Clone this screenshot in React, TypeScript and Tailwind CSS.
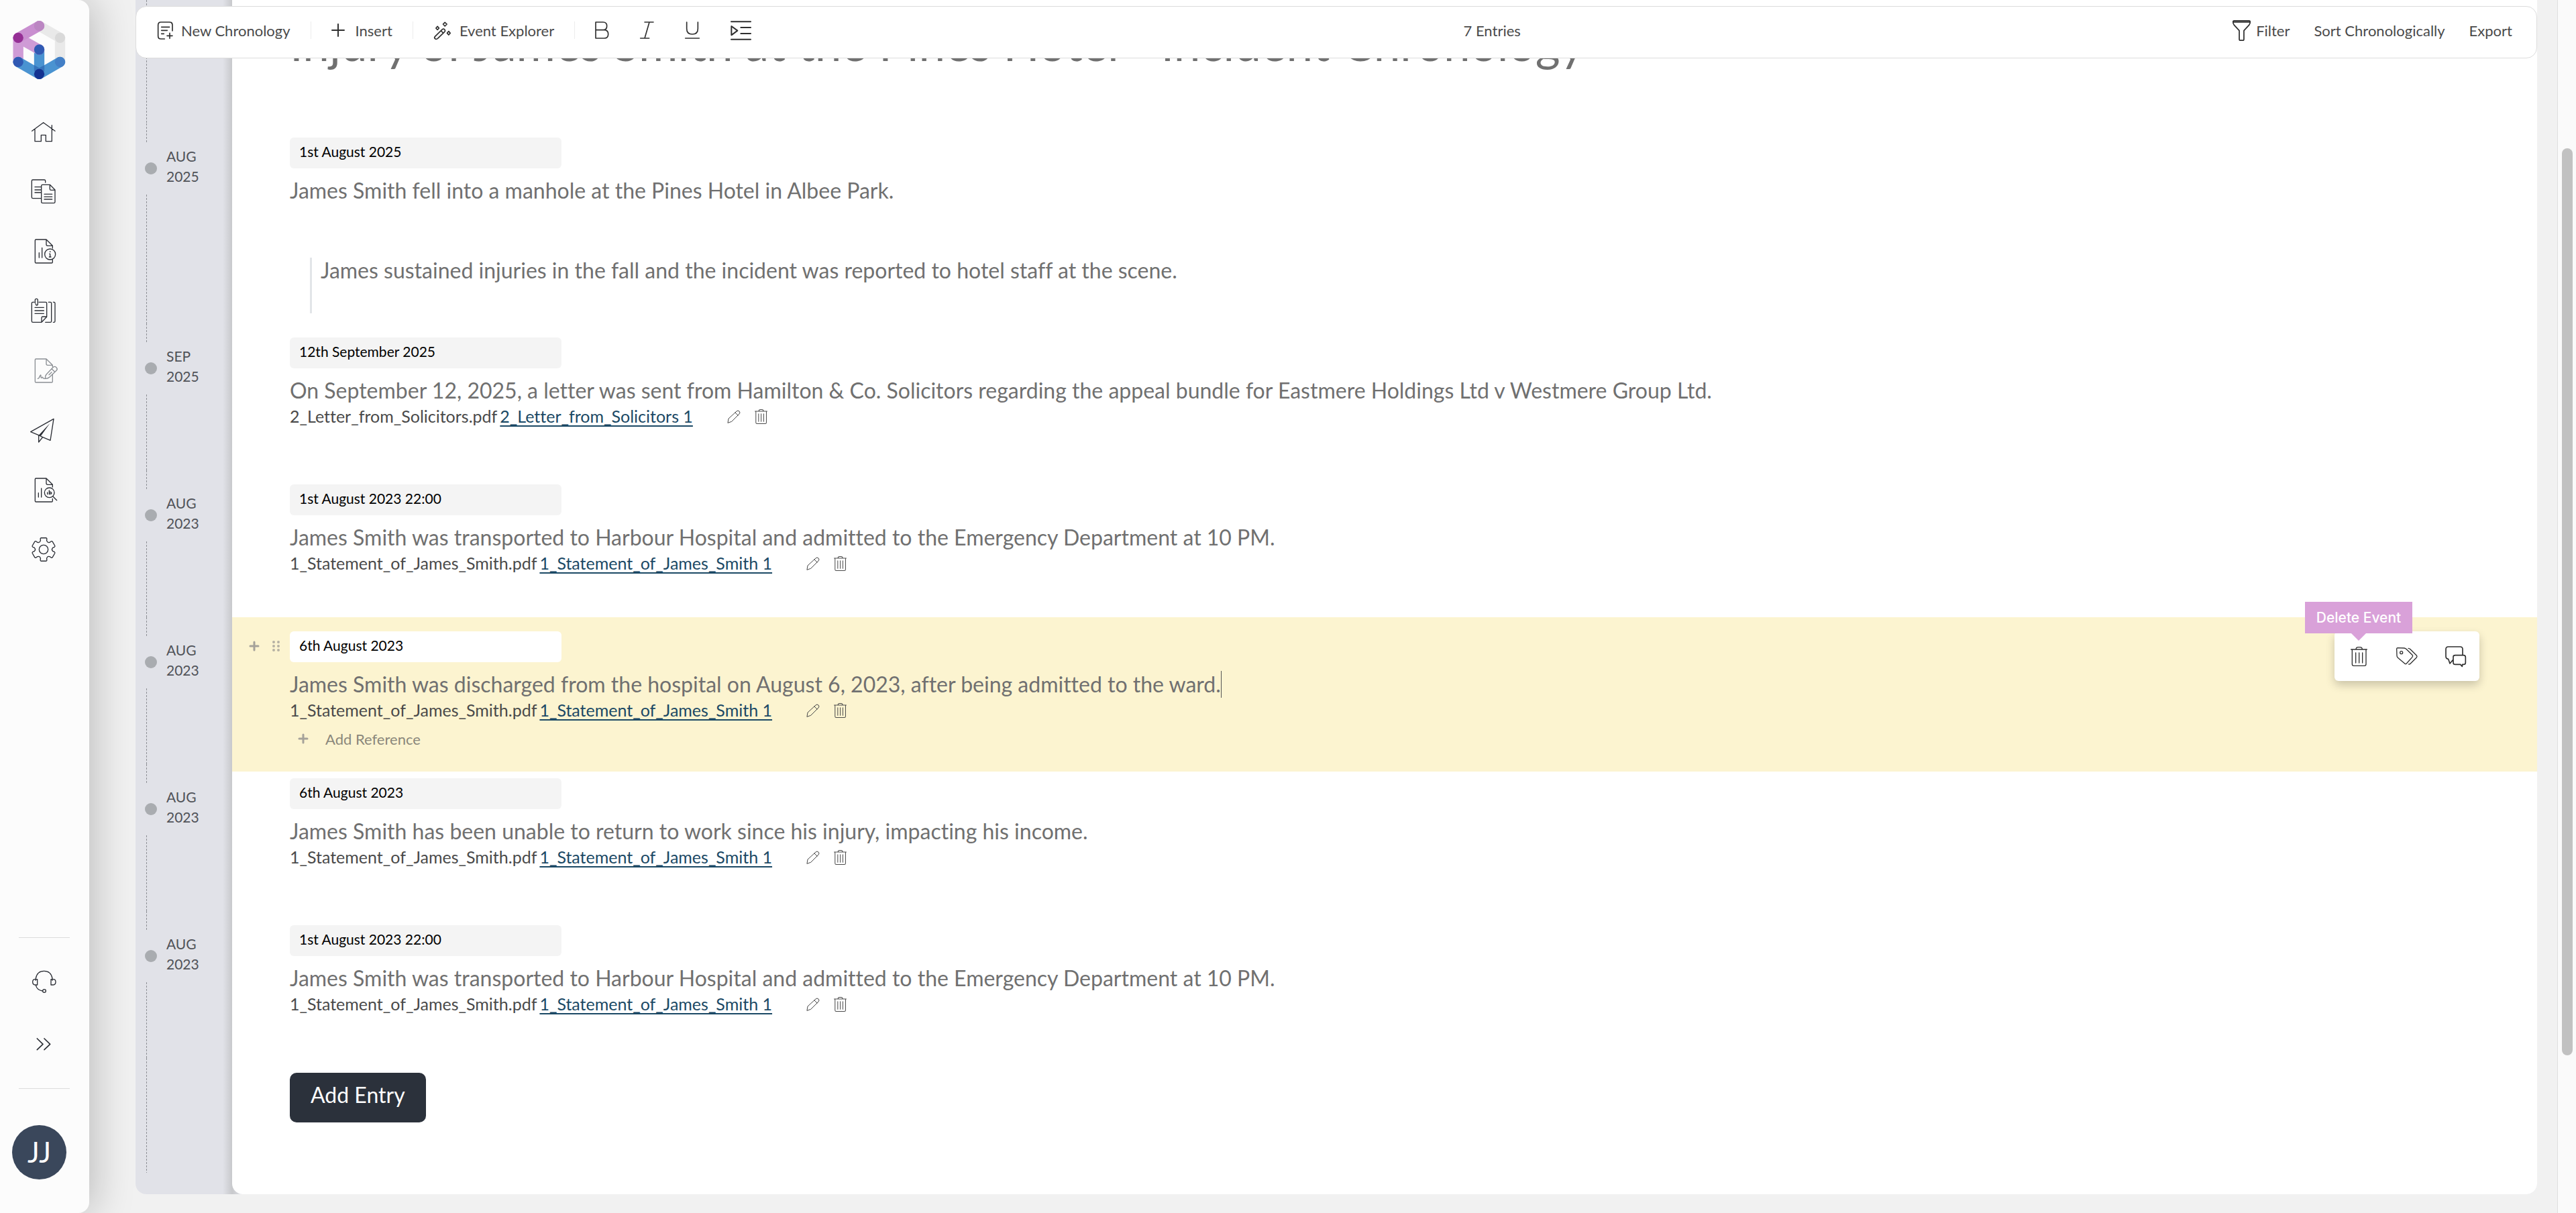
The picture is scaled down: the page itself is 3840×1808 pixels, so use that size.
import type { ReactNode } from 'react';

interface IconProps {
  children: ReactNode;
  className?: string;
  box?: string;
  stroke?: number;
}

function Icon({ children, className = 'size-9', box = '0 0 108 108', stroke = 4 }: IconProps) {
  return (
    <svg
      viewBox={box}
      className={`${className} shrink-0 overflow-visible`}
      fill="none"
      stroke="currentColor"
      strokeWidth={stroke}
      strokeLinecap="round"
      strokeLinejoin="round"
      aria-hidden="true"
    >
      {children}
    </svg>
  );
}

const PAGE = 'M94 42V31L66 3H20q-4 0-4 4v97q0 4 4 4h70q4 0 4-4V94M66 3v22q0 6 6 6h22';

function cogPath() {
  const pts: string[] = [];
  const at = (deg: number, r: number) => {
    const a = ((deg - 90) * Math.PI) / 180;
    return `${(54 + r * Math.cos(a)).toFixed(1)} ${(54 + r * Math.sin(a)).toFixed(1)}`;
  };
  for (let i = 0; i < 6; i++) {
    const d = i * 60;
    pts.push(`${i ? 'L' : 'M'}${at(d - 22, 40)}L${at(d - 19, 42)}L${at(d - 17, 50)}Q${at(d - 16, 53)} ${at(d - 12, 53)}`);
    pts.push(`L${at(d + 12, 53)}Q${at(d + 16, 53)} ${at(d + 17, 50)}L${at(d + 19, 42)}L${at(d + 22, 40)}`);
    pts.push(`Q${at(d + 30, 35)} ${at(d + 38, 40)}`);
  }
  return pts.join('') + 'Z';
}

function Logo() {
  return (
    <svg viewBox="0 0 236 264" className="h-[88px] w-[79px]" fill="none" strokeWidth="46" strokeLinecap="round" aria-label="Home">
      <path d="M118 23L211 76V184" stroke="#e9e9e9" strokeLinejoin="round" />
      <path d="M118 129V238" stroke="#4a93d1" />
      <path d="M24 76V184M118 129L24 76" stroke="#cf9bd6" />
      <path d="M118 23L24 76" stroke="#c98fd0" />
      <path d="M24 184L118 238L211 184" stroke="#4a93d1" strokeLinejoin="round" />
      <path d="M95 225V198L118 211L141 198V225L118 238Z" fill="#3573bb" stroke="none" />
      <g stroke="none">
        <circle cx="118" cy="23" r="23" fill="#bb86c2" />
        <circle cx="24" cy="76" r="23" fill="#952f95" />
        <circle cx="211" cy="76" r="23" fill="#d9d9d9" />
        <circle cx="118" cy="129" r="23" fill="#3059b3" />
        <circle cx="24" cy="184" r="23" fill="#3059b3" />
        <circle cx="211" cy="184" r="23" fill="#437fc6" />
        <circle cx="118" cy="238" r="23" fill="#143291" />
      </g>
    </svg>
  );
}

const navItems = [
  { label: 'Home', art: <path d="M2 52L53 14L105 52M15 44V98H43V70H64V98H91V26" /> },
  {
    label: 'Bundles',
    art: (
      <>
        <path d="M62 15V8q0-5-5-5H6q-5 0-5 5v73q0 5 5 5H43M15 35H42M15 48H42M15 60H42" />
        <path d="M82 25H49q-5 0-5 5v72q0 5 5 5h51q5 0 5-5V48L82 25V44q0 5 5 5h17M57 67H92M57 79H92M57 90H92" />
      </>
    ),
  },
  {
    label: 'Reports',
    art: (
      <>
        <path d={PAGE} />
        <path d="M34 62V84M47 40V84M83 67V80M80 67H83M79 81H87" />
        <circle cx="83" cy="69" r="24" />
        <circle cx="83" cy="58" r="1" />
      </>
    ),
  },
  {
    label: 'Chronologies',
    art: (
      <>
        <path d="M12 16H6q-5 0-5 5v80q0 5 5 5H45L68 82V21q0-5-5-5H33M45 106V86q0-5 5-5H68M15 40H55M15 54H55M15 67H55" />
        <path d="M16 20V7q0-6 6-6q6 0 6 6V24q0 6-5 6q-4 0-4-6" />
        <path d="M76 16H84q5 0 5 5v80q0 5-5 5H62M97 16h3q5 0 5 5v80q0 5-5 5h-3" />
      </>
    ),
  },
  {
    label: 'Drafting',
    muted: true,
    art: (
      <>
        <path d="M94 38V31L66 3H20q-4 0-4 4v97q0 4 4 4h70q4 0 4-4V72M66 3v22q0 6 6 6h22" />
        <path d="M62 91Q60 78 67 71L97 40Q104 34 111 41Q118 48 112 54L81 84Q74 91 62 91ZM90 47L104 61M78 74L90 62" />
        <path d="M28 91Q34 90 38 78Q42 70 42 80Q42 92 47 86Q50 82 51 88Q54 92 62 91" />
      </>
    ),
  },
  {
    label: 'Send',
    art: (
      <>
        <path d="M-4 62L99 4L84 100L50 86L32 77ZM32 77V108L50 86" />
        <path d="M32 77L82 24L42 80Z" fill="currentColor" stroke="none" />
      </>
    ),
  },
  {
    label: 'Search documents',
    art: (
      <>
        <path d={PAGE} />
        <path d="M31 68V87M44 48V87M96 84L113 101M71 66V74M79 57V74M84 62V74M89 66V72" />
        <circle cx="80" cy="67" r="22" />
      </>
    ),
  },
  {
    label: 'Settings',
    art: (
      <>
        <path d={cogPath()} />
        <circle cx="54" cy="54" r="20" />
      </>
    ),
  },
];

function Sidebar() {
  return (
    <aside className="z-20 flex w-[133px] shrink-0 flex-col rounded-r-2xl bg-[#fcfcfc] text-[#2b2e35] shadow-[8px_0_60px_rgba(0,0,0,0.22)]">
      <div className="pt-[31px] pl-[19px]">
        <Logo />
      </div>
      <nav className="mt-8 flex flex-col">
        {navItems.map((item) => (
          <button
            key={item.label}
            aria-label={item.label}
            className={`flex h-[89px] items-center pl-[47px] ${item.muted ? 'text-[#8b8f94]' : ''}`}
          >
            <Icon>{item.art}</Icon>
          </button>
        ))}
      </nav>
      <div className="mt-auto mr-[29px] ml-[28px] flex flex-col items-center border-y border-[#dcdcdc] py-5">
        <button aria-label="Support" className="flex h-[92px] items-center">
          <Icon>
            <path d="M16 46V37Q22 4 53 4T90 37V46M23 41V66H16Q2 66 2 53Q2 40 14 41ZM84 41V66H91Q105 66 105 53Q105 40 93 41ZM16 68Q22 90 46 93" />
            <circle cx="54" cy="93" r="7" />
          </Icon>
        </button>
        <button aria-label="Expand menu" className="flex h-[92px] items-center">
          <Icon stroke={5}>
            <path d="M22 30L48 55L22 80M54 30L80 55L54 80" />
          </Icon>
        </button>
      </div>
      <button className="mt-[54px] mb-[50px] ml-[18px] size-[81px] rounded-full bg-[#3a475b] text-[42px] text-white">JJ</button>
    </aside>
  );
}

function ToolbarDivider() {
  return <span className="h-[26px] w-px bg-[#ececec]" />;
}

function Toolbar() {
  return (
    <header className="absolute inset-x-0 top-[9px] z-10 flex h-[78px] items-center justify-between rounded-2xl border border-[#dcdcdc] bg-white pr-9 pb-[6px] pl-8 text-[22px] text-[#4a4a4a]">
      <div className="flex items-center gap-[30px]">
        <button className="flex items-center gap-3">
          <Icon className="h-[27px] w-[23px] text-[#2f2f2f]" box="0 0 69 81" stroke={5}>
            <path d="M66 42V16Q66 3 53 3H15Q2 3 2 16V65Q2 78 15 78H31M17 25H53M17 40H43M17 55H28M54 52V76M42 64H66" />
          </Icon>
          New Chronology
        </button>
        <ToolbarDivider />
        <button className="flex items-center gap-4">
          <Icon className="size-5 text-[#2f2f2f]" box="0 0 20 20" stroke={2}>
            <path d="M10 1V19M1 10H19" />
          </Icon>
          Insert
        </button>
        <ToolbarDivider />
        <button className="flex items-center gap-3">
          <Icon className="size-[27px] text-[#2f2f2f]" box="0 0 78 81" stroke={5}>
            <path d="M6 67L39 35Q44 31 49 36Q53 41 49 46L17 77Q11 81 6 77Q1 72 6 67ZM33 42L43 52" />
            <path d="M50 4L59 12L50 21L42 12ZM17 22L24 30L17 37L10 30ZM67 44L74 52L67 60L60 52Z" />
          </Icon>
          Event Explorer
        </button>
        <ToolbarDivider />
        <div className="flex items-center gap-[46px] text-[#2f2f2f]">
          <button aria-label="Bold">
            <Icon className="h-[26px] w-[21px]" box="0 0 63 78" stroke={5}>
              <path d="M3 3H36Q53 3 53 20T36 38H3ZM3 38H40Q59 38 59 57T40 75H3Z" />
            </Icon>
          </button>
          <button aria-label="Italic">
            <Icon className="h-[26px] w-[21px]" box="0 0 63 78" stroke={5}>
              <path d="M21 3H60M2 75H41M42 3L21 75" />
            </Icon>
          </button>
          <button aria-label="Underline">
            <Icon className="h-[26px] w-[22px]" box="0 0 66 78" stroke={5}>
              <path d="M8 3V32Q8 57 33 57T58 32V3M2 75H64" />
            </Icon>
          </button>
          <button aria-label="Indent">
            <Icon className="h-[29px] w-[31px]" box="0 0 93 87" stroke={6}>
              <path d="M3 4H90M46 30H90M46 57H90M3 83H90M4 24V64L31 44Z" />
            </Icon>
          </button>
        </div>
      </div>
      <span>7 Entries</span>
      <div className="flex items-center gap-9">
        <button className="flex items-center gap-2">
          <Icon className="h-8 w-[27px] text-[#2f2f2f]" box="0 0 78 92" stroke={5}>
            <path d="M6 5H72Q76 5 76 10Q76 18 71 24L49 48V84Q49 90 44 90H34Q29 90 29 84V48L7 24Q2 18 2 10Q2 5 6 5ZM3 11H75" />
          </Icon>
          Filter
        </button>
        <button>Sort Chronologically</button>
        <button>Export</button>
      </div>
    </header>
  );
}

function TrashIcon({ className }: { className?: string }) {
  return (
    <Icon className={className} box="0 0 75 87" stroke={4}>
      <path d="M2 12H73M7 13V78Q7 85 14 85H62Q69 85 69 78V13M24 12Q24 2 34 2H42Q52 2 52 12M23 27V72M38 27V72M53 27V72" />
    </Icon>
  );
}

function Dashes({ className }: { className: string }) {
  return (
    <div
      className={`ml-4 w-px bg-[repeating-linear-gradient(to_bottom,#8d8f95_0_3px,transparent_3px_5px)] ${className}`}
    />
  );
}

interface TimelineEntry {
  month: string;
  year: string;
  date: string;
  text: string;
  quote?: string;
  file?: string;
  link?: string;
  active?: boolean;
}

const STATEMENT = { file: '1_Statement_of_James_Smith.pdf', link: '1_Statement_of_James_Smith 1' };

const ADMITTED =
  'James Smith was transported to Harbour Hospital and admitted to the Emergency Department at 10 PM.';

const entries: TimelineEntry[] = [
  {
    month: 'AUG',
    year: '2025',
    date: '1st August 2025',
    text: 'James Smith fell into a manhole at the Pines Hotel in Albee Park.',
    quote: 'James sustained injuries in the fall and the incident was reported to hotel staff at the scene.',
  },
  {
    month: 'SEP',
    year: '2025',
    date: '12th September 2025',
    text: 'On September 12, 2025, a letter was sent from Hamilton & Co. Solicitors regarding the appeal bundle for Eastmere Holdings Ltd v Westmere Group Ltd.',
    file: '2_Letter_from_Solicitors.pdf',
    link: '2_Letter_from_Solicitors 1',
  },
  { month: 'AUG', year: '2023', date: '1st August 2023 22:00', text: ADMITTED, ...STATEMENT },
  {
    month: 'AUG',
    year: '2023',
    date: '6th August 2023',
    text: 'James Smith was discharged from the hospital on August 6, 2023, after being admitted to the ward.',
    active: true,
    ...STATEMENT,
  },
  {
    month: 'AUG',
    year: '2023',
    date: '6th August 2023',
    text: 'James Smith has been unable to return to work since his injury, impacting his income.',
    ...STATEMENT,
  },
  { month: 'AUG', year: '2023', date: '1st August 2023 22:00', text: ADMITTED, ...STATEMENT },
];

function PlusIcon() {
  return (
    <Icon className="size-[14px] text-[#a5a29a]" box="0 0 14 14" stroke={3}>
      <path d="M7 1V13M1 7H13" />
    </Icon>
  );
}

function EntryActions() {
  return (
    <div className="relative flex h-[74px] items-center rounded-md bg-white text-[#2f2f2f] shadow-[0_6px_14px_rgba(0,0,0,0.2)]">
      <button aria-label="Delete Event" className="flex w-[72px] justify-center">
        <TrashIcon className="h-[29px] w-[25px]" />
      </button>
      <button aria-label="Tags" className="flex w-[72px] justify-center">
        <Icon className="h-[26px] w-8" box="0 0 96 78" stroke={4}>
          <path d="M2 6Q2 3 6 2L36 3Q42 4 46 8L72 34Q76 38 72 43L46 72Q42 76 38 72L7 46Q3 42 3 37ZM54 4Q59 4 63 8L91 36Q95 40 91 45L64 72Q60 76 56 75" />
          <circle cx="23" cy="23" r="6" />
        </Icon>
      </button>
      <button aria-label="Comments" className="flex w-[72px] justify-center">
        <Icon className="h-[31px] w-[31px]" box="0 0 93 93" stroke={5}>
          <path d="M78 40V14Q78 3 67 3H14Q3 3 3 14V46Q3 57 14 58L21 78L36 60V48Q36 41 45 41H82Q91 41 91 50V74Q91 82 82 82H77L76 91L68 82H45Q36 82 36 74V60" />
        </Icon>
      </button>
      <div
        role="tooltip"
        className="absolute top-[-44px] left-[-44px] flex h-[47px] w-[160px] items-center justify-center bg-[#d9a1d9] font-['Inter'] text-[21px] font-medium text-white"
      >
        Delete Event
        <span className="absolute top-full left-1/2 -translate-x-1/2 border-x-[11px] border-t-[11px] border-x-transparent border-t-[#d9a1d9]" />
      </div>
    </div>
  );
}

function EntryRow({ entry }: { entry: TimelineEntry }) {
  let spacing = 'pb-[61px]';
  if (entry.quote) spacing = 'pb-[15px]';
  if (entry.active) spacing = 'relative -mb-[11px] bg-[#fcf4d0] pb-[27px]';

  return (
    <li className="flex">
      {/* Timeline rail */}
      <div className="flex w-36 shrink-0 flex-col">
        <Dashes className="h-7" />
        <div className="flex h-[78px] items-center gap-[14px] pl-[14px] text-[21px] leading-[30px] text-[#505258]">
          <span className="size-[18px] rounded-full bg-[#a9acb0]" />
          <span className="pb-[6px]">
            {entry.month}
            <br />
            {entry.year}
          </span>
        </div>
        <Dashes className="flex-1" />
      </div>

      {/* Event */}
      <div className="min-w-0 flex-1 bg-white">
        <article className={`flex pt-[21px] pr-[86px] ${spacing}`}>
          <div className="flex h-[43px] w-[86px] shrink-0 items-center gap-5 pl-[26px]">
            {entry.active && (
              <>
                <button aria-label="Insert event">
                  <PlusIcon />
                </button>
                <button aria-label="Move event">
                  <Icon className="h-4 w-3 text-[#b5b1a3]" box="0 0 12 16" stroke={4}>
                    <path d="M2 2h0M9 2h0M2 8h0M9 8h0M2 14h0M9 14h0" />
                  </Icon>
                </button>
              </>
            )}
          </div>
          <div className="min-w-0 flex-1">
            <input
              aria-label="Event date"
              defaultValue={entry.date}
              className={`block h-[46px] w-[405px] rounded-md px-[14px] pb-[6px] text-[21px] text-black ${entry.active ? 'bg-white' : 'bg-[#f4f4f4]'}`}
            />
            <p className={`mt-[13px] w-fit text-[32px] leading-10 text-[#707070] ${entry.active ? 'border-r border-[#555]' : ''}`}>
              {entry.text}
            </p>
            {entry.quote && (
              <blockquote className="mt-20 ml-[30px] h-[83px] border-l-[3px] border-[#e2e5e8] pl-[13px] text-[32px] leading-[38px] text-[#707070]">
                {entry.quote}
              </blockquote>
            )}
            {entry.file && (
              <div className="flex h-[38px] items-center text-[25px] text-[#4a4a4a]">
                <span>{entry.file}</span>
                <a href="#" className="ml-1 text-[#1b4965] underline underline-offset-4 [text-decoration-skip-ink:none]">
                  {entry.link}
                </a>
                <button aria-label="Edit reference" className="ml-[50px]">
                  <Icon className="size-[21px]" box="0 0 21 21" stroke={1}>
                    <path d="M2 19L3 13L15 2Q17 0 19 2Q21 4 19 6L8 17ZM13 4L17 8" />
                  </Icon>
                </button>
                <button aria-label="Delete reference" className="ml-[21px]">
                  <TrashIcon className="h-[22px] w-[19px]" />
                </button>
              </div>
            )}
            {entry.active && (
              <button className="mt-[5px] flex h-10 items-center gap-[26px] pb-1 pl-[13px] text-[22px] text-[#8a877b]">
                <PlusIcon />
                Add Reference
              </button>
            )}
          </div>
          {entry.active && <EntryActions />}
        </article>
      </div>
    </li>
  );
}

function ScrollTrack() {
  return (
    <div className="ml-[30px] flex w-7 shrink-0 flex-col items-center border-l border-[#dedede] bg-[#fafafa]">
      <div className="h-[12.2%]" />
      <div className="h-[74.8%] w-4 rounded-full bg-[#c1c1c1]" />
    </div>
  );
}

export default function App() {
  return (
    <div className="flex min-h-screen overflow-hidden bg-[#f1f1f1] font-['Lato',sans-serif] [font-variant-ligatures:none]">
      <Sidebar />
      <main className="relative ml-[69px] min-w-0 flex-1 pb-7">
        <Toolbar />
        <div className="rounded-b-2xl bg-[linear-gradient(to_right,#e1e2e8_130px,#c8c9cc_144px,#e1e2e8_160px)]">
          <div className="flex">
            <div className="flex w-36 shrink-0">
              <Dashes className="h-full" />
            </div>
            <div className="flex h-[184px] flex-1 bg-white pl-[86px]">
              <h1 className="mt-[22px] text-[71px] leading-[84px] whitespace-nowrap text-[#707070]">
                Injury of James Smith at the Pines Hotel - Incident Chronology
              </h1>
            </div>
          </div>
          <ol>
            {entries.map((entry, i) => (
              <EntryRow key={i} entry={entry} />
            ))}
          </ol>
          <div className="flex">
            <div className="flex w-36 shrink-0 flex-col pb-8">
              <Dashes className="flex-1" />
            </div>
            <div className="flex-1 rounded-b-2xl bg-white pt-[22px] pb-[107px] pl-[86px]">
              <button className="h-[74px] rounded-[10px] bg-[#2b313b] px-[31px] pb-2 text-[32px] text-white">Add Entry</button>
            </div>
          </div>
        </div>
      </main>
      <ScrollTrack />
    </div>
  );
}
